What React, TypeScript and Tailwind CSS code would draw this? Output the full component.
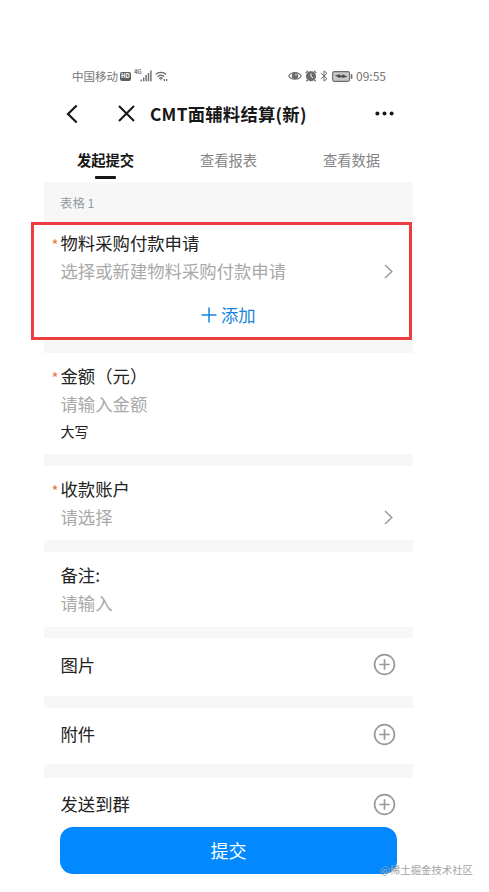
import { ReactNode } from "react";

const tabs = [
  { label: "发起提交", active: true },
  { label: "查看报表", active: false },
  { label: "查看数据", active: false },
];

function StatusBar() {
  return (
    <div className="flex h-5 items-center justify-between pl-7 pr-[27px] text-[11.5px] leading-5 text-[#757575]">
      <div className="flex items-center">
        <span>中国移动</span>
        <span className="ml-0.5 flex h-[9px] w-[11px] items-center justify-center rounded-[2px] bg-[#606060] text-[6px] font-bold leading-none text-white">
          HD
        </span>
        <span className="-mt-2 ml-[3px] w-[7px] text-[6px] font-bold leading-none tracking-tighter">4G</span>
        <svg className="-ml-px" width="12" height="12" viewBox="0 0 12 12" fill="#6b6b6b">
          <rect x="0.5" y="9.5" width="1.4" height="1.8" />
          <rect x="3" y="7.5" width="1.4" height="3.8" />
          <rect x="5.4" y="5" width="1.4" height="6.3" />
          <rect x="7.8" y="3" width="1.4" height="8.3" />
          <rect x="10.2" y="0.5" width="1.4" height="10.8" />
        </svg>
        <svg className="ml-[3px]" width="13" height="11" viewBox="0 0 13 11" fill="none" stroke="#6b6b6b" strokeWidth="1.3">
          <path d="M0.6 3.4C3.4 0.7 8.3 0.7 11.2 3.4" />
          <path d="M2.4 5.6C4.3 3.8 7.4 3.8 9.3 5.6" />
          <path d="M4.1 7.5C5.2 6.6 6.6 6.6 7.6 7.5" />
          <path d="M4.9 8.3L5.9 9.6L6.9 8.3Z" fill="#6b6b6b" stroke="none" />
          <path d="M9.3 8V10M11.6 8V10" />
        </svg>
      </div>

      <div className="flex items-center">
        <svg width="14" height="10" viewBox="0 0 14 10" fill="none" stroke="#6b6b6b" strokeWidth="1.1">
          <path d="M0.8 5C3.3 0.4 10.7 0.4 13.2 5C10.7 9.4 3.3 9.4 0.8 5Z" />
          <circle cx="7" cy="4.8" r="2.7" fill="#6b6b6b" />
          <circle cx="8" cy="3.8" r="0.8" fill="white" stroke="none" />
        </svg>
        <svg className="ml-[3px]" width="12" height="12" viewBox="0 0 12 12" fill="none" stroke="#6b6b6b" strokeWidth="1.3">
          <circle cx="6" cy="6.2" r="4.4" fill="#6b6b6b" />
          <path d="M0.8 3L3 0.9M11.2 3L9 0.9M2.6 10L1.4 11.3M9.4 10L10.6 11.3" />
          <path d="M6 3.5V6.4L8 8" stroke="white" strokeWidth="1" />
        </svg>
        <svg className="ml-[3px]" width="8" height="12" viewBox="0 0 8 12" fill="none" stroke="#6b6b6b" strokeWidth="1">
          <path d="M0.8 3L7 8.6L4 11.2V0.8L7 3.4L0.8 9" />
        </svg>
        <svg className="ml-1" width="21" height="11" viewBox="0 0 21 11" fill="none" stroke="#6b6b6b" strokeWidth="1.1">
          <rect x="0.6" y="0.6" width="17" height="9.8" rx="1.8" fill="#c8c8c8" />
          <path d="M3 4.5L7.5 3.3L8.5 4.7L11 3.5L15.5 5.5L11 7.1L9.5 5.9L7.5 7Z" fill="#505050" stroke="none" />
          <path d="M19.6 3.2V7.8" strokeWidth="1.5" />
        </svg>
        <span className="ml-[3px] text-[12px]">09:55</span>
      </div>
    </div>
  );
}

function Header() {
  return (
    <div className="flex h-14 items-center pb-px pl-[22px] pr-[19px]">
      <svg width="12" height="20" viewBox="0 0 12 20" fill="none" stroke="#171717" strokeWidth="2.2">
        <path d="M10.7 1.5L2 10L10.7 18.5" />
      </svg>
      <svg className="ml-10" width="17" height="17" viewBox="0 0 17 17" fill="none" stroke="#171717" strokeWidth="2">
        <path d="M1 1L16 16M16 1L1 16" />
      </svg>
      <h1 className="ml-[15px] text-[17.3px] font-bold leading-6 tracking-[0.28px] text-[#171717]">CMT面辅料结算(新)</h1>
      <svg className="ml-auto" width="19" height="5" viewBox="0 0 19 5" fill="#171717">
        <circle cx="2.4" cy="2.5" r="2" />
        <circle cx="9.5" cy="2.5" r="2" />
        <circle cx="16.6" cy="2.5" r="2" />
      </svg>
    </div>
  );
}

function PlusCircle() {
  return (
    <svg width="23" height="23" viewBox="0 0 23 23" fill="none" stroke="#999999" strokeWidth="1.7">
      <circle cx="11.5" cy="11.5" r="9.9" />
      <path d="M11.5 6.2V16.8M6.2 11.5H16.8" />
    </svg>
  );
}

function Chevron() {
  return (
    <svg className="mr-[3px]" width="9" height="15" viewBox="0 0 9 15" fill="none" stroke="#999999" strokeWidth="1.5">
      <path d="M1 1L7.8 7.5L1 14" />
    </svg>
  );
}

function Label({ children, required }: { children: ReactNode; required?: boolean }) {
  return (
    <div className="relative h-7 text-[17.35px] leading-[27px] text-[#222222]">
      {required && <span className="absolute -left-[9px] top-[2px] text-[15px] text-[#e8793f]">*</span>}
      {children}
    </div>
  );
}

function Placeholder({ children, arrow }: { children: ReactNode; arrow?: boolean }) {
  return (
    <div className="flex h-[29px] items-center justify-between text-[17.35px] leading-[27px] text-[#a9a9a9]">
      <span className="-mt-0.5">{children}</span>
      {arrow && <Chevron />}
    </div>
  );
}

export default function App() {
  return (
    <div className="relative h-[892px] w-[489px] overflow-hidden bg-white font-['Noto_Sans_CJK_SC',sans-serif]">
      <div className="ml-11 flex w-[369px] flex-col pt-[66px]">
        <StatusBar />
        <Header />

        {/* Tabs */}
        <div className="grid h-10 grid-cols-3">
          {tabs.map((tab) => (
            <div key={tab.label} className="flex flex-col items-center pt-1.5">
              <span
                className={
                  tab.active
                    ? "text-[14.3px] font-bold leading-6 text-[#171717]"
                    : "text-[14.3px] leading-6 text-[#858585]"
                }
              >
                {tab.label}
              </span>
              {tab.active && <span className="mt-1 h-[3px] w-[21px] rounded-[1px] bg-[#171717]" />}
            </div>
          ))}
        </div>

        <div className="h-10 bg-[#f7f7f7] pl-4 text-[12.4px] leading-[42px] text-[#9299a1]">表格 1</div>

        {/* Form */}
        <div className="flex flex-col">
          <section className="relative h-[118px] pl-[16.5px] pr-[17px] pt-[7px]">
            <Label required>物料采购付款申请</Label>
            <Placeholder arrow>选择或新建物料采购付款申请</Placeholder>
            <div className="mt-[15px] flex h-7 items-center justify-center gap-1 text-[17.35px] leading-7 text-[#1685e0]">
              <svg width="16" height="16" viewBox="0 0 16 16" fill="none" stroke="#1685e0" strokeWidth="1.5">
                <path d="M8 0.5V15.5M0.5 8H15.5" />
              </svg>
              添加
            </div>
            <div className="absolute -left-[13px] right-px top-0 bottom-0 border-[3px] border-[#ec3d41]" />
          </section>

          <div className="h-[13px] bg-[#f7f7f7]" />

          <section className="h-[101px] pl-[16.5px] pr-[17px] pt-[9px]">
            <Label required>金额（元）</Label>
            <Placeholder>请输入金额</Placeholder>
            <div className="text-[14px] leading-[25px] text-[#222222]">大写</div>
          </section>

          <div className="h-3 bg-[#f7f7f7]" />

          <section className="h-[74px] pl-[16.5px] pr-[17px] pt-[9px]">
            <Label required>收款账户</Label>
            <Placeholder arrow>请选择</Placeholder>
          </section>

          <div className="h-3 bg-[#f7f7f7]" />

          <section className="h-[75px] pl-[16.5px] pr-[17px] pt-[9px]">
            <Label>备注:</Label>
            <Placeholder>请输入</Placeholder>
          </section>

          <div className="h-[11px] bg-[#f7f7f7]" />

          <section className="flex h-[58px] items-center justify-between pb-[5px] pl-[16.5px] pr-[17px]">
            <Label>图片</Label>
            <PlusCircle />
          </section>

          <div className="h-3 bg-[#f7f7f7]" />

          <section className="flex h-14 items-center justify-between pb-1 pl-[16.5px] pr-[17px]">
            <Label>附件</Label>
            <PlusCircle />
          </section>

          <div className="h-[14px] bg-[#f7f7f7]" />

          <section className="flex h-[49px] items-center justify-between pl-[16.5px] pr-[17px] pt-[3px]">
            <Label>发送到群</Label>
            <PlusCircle />
          </section>
        </div>

        <button className="mx-4 h-[47px] rounded-[13px] bg-[#0389ff] text-[18px] leading-[45px] text-white">提交</button>
      </div>

      {/* Watermark */}
      <span className="absolute bottom-3 right-4 text-[10.4px] leading-5 text-[#a3a3a3]">
        @稀土掘金技术社区
      </span>
    </div>
  );
}
